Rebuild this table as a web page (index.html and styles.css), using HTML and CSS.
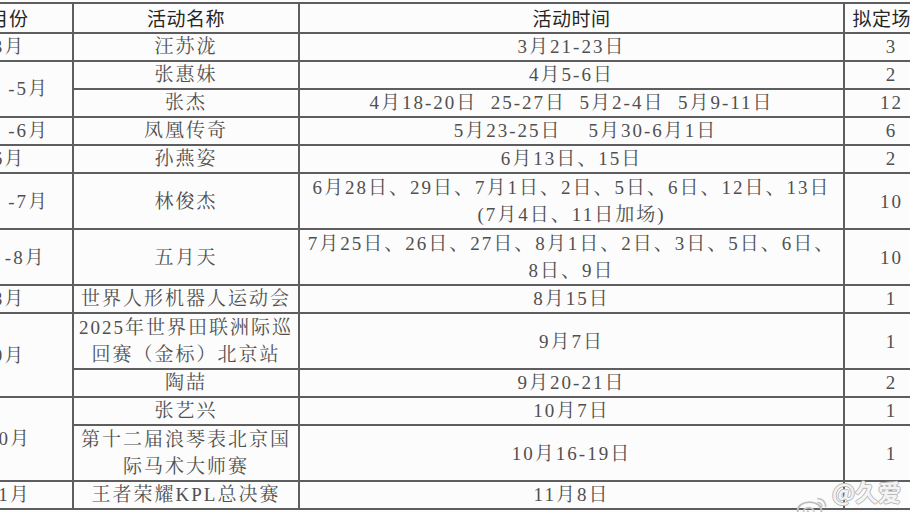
FILE: index.html
```html
<!DOCTYPE html>
<html lang="zh-CN">
<head>
<meta charset="utf-8">
<title>活动安排</title>
<link rel="stylesheet" href="styles.css">
</head>
<body>
<div class="page">
<table class="sched">
  <colgroup>
    <col class="c-month"><col class="c-name"><col class="c-time"><col class="c-count">
  </colgroup>
  <thead>
    <tr class="r1 head"><th>月份</th><th>活动名称</th><th>活动时间</th><th>拟定场次</th></tr>
  </thead>
  <tbody>
    <tr class="r1"><td>3月</td><td>汪苏泷</td><td>3月21-23日</td><td>3</td></tr>
    <tr class="r1"><td rowspan="2">4月 -5月</td><td>张惠妹</td><td>4月5-6日</td><td>2</td></tr>
    <tr class="r1"><td>张杰</td><td>4月18-20日&nbsp; 25-27日&nbsp; 5月2-4日&nbsp; 5月9-11日</td><td>12</td></tr>
    <tr class="r1"><td>5月 -6月</td><td>凤凰传奇</td><td class="shift">5月23-25日&nbsp;&nbsp;&nbsp; 5月30-6月1日</td><td>6</td></tr>
    <tr class="r1"><td>6月</td><td>孙燕姿</td><td>6月13日、15日</td><td>2</td></tr>
    <tr class="r2"><td>6月 -7月</td><td>林俊杰</td><td>6月28日、29日、7月1日、2日、5日、6日、12日、13日<br>(7月4日、11日加场)</td><td>10</td></tr>
    <tr class="r2"><td>7月-8月</td><td>五月天</td><td>7月25日、26日、27日、8月1日、2日、3日、5日、6日、<br>8日、9日</td><td>10</td></tr>
    <tr class="r1"><td>8月</td><td>世界人形机器人运动会</td><td>8月15日</td><td>1</td></tr>
    <tr class="r2"><td rowspan="2">9月</td><td>2025年世界田联洲际巡<br>回赛（金标）北京站</td><td>9月7日</td><td>1</td></tr>
    <tr class="r1"><td>陶喆</td><td>9月20-21日</td><td>2</td></tr>
    <tr class="r1"><td rowspan="2">10月</td><td>张艺兴</td><td>10月7日</td><td>1</td></tr>
    <tr class="r2"><td>第十二届浪琴表北京国<br>际马术大师赛</td><td>10月16-19日</td><td>1</td></tr>
    <tr class="r1"><td>11月</td><td>王者荣耀KPL总决赛</td><td>11月8日</td><td>1</td></tr>
  </tbody>
</table>
<div class="mark">
  <svg class="wb" width="40" height="30" viewBox="0 0 40 30">
    <ellipse cx="16" cy="18" rx="14" ry="10" fill="none" stroke="#bdbdbd" stroke-width="2.2"/>
    <ellipse cx="15" cy="19" rx="6" ry="4.5" fill="none" stroke="#c8c8c8" stroke-width="2"/>
    <circle cx="14" cy="19.5" r="1.6" fill="#c4c4c4"/>
    <path d="M26 4 A9 9 0 0 1 35 13" fill="none" stroke="#c4c4c4" stroke-width="2.2" stroke-linecap="round"/>
    <path d="M26 8.5 A4.5 4.5 0 0 1 30.5 13" fill="none" stroke="#c4c4c4" stroke-width="2" stroke-linecap="round"/>
  </svg>
  <span class="mark-text">@久爱吃</span>
</div>
</div>
</body>
</html>
```
FILE: styles.css
```css
html, body {
  margin: 0;
  padding: 0;
  background: #fcfcfc;
}
.page {
  position: relative;
  width: 910px;
  height: 512px;
  overflow: hidden;
}
.sched {
  border-collapse: collapse;
  table-layout: fixed;
  margin: 2px 0 0 -56px;
  width: 994px;
  font-family: "Liberation Serif", "Noto Serif CJK SC", "Noto Sans CJK SC", serif;
  font-size: 19px;
  color: #505050;
  letter-spacing: 2px;
}
.c-month { width: 128px; }
.c-name { width: 226px; }
.c-time { width: 545px; }
.c-count { width: 95px; }
.sched th, .sched td {
  border: 2px solid #5e5e5e;
  padding: 0;
  text-align: center;
  vertical-align: middle;
  line-height: 26px;
  white-space: nowrap;
}
.sched th {
  font-family: "Noto Sans CJK SC", sans-serif;
  font-weight: 400;
  color: #262626;
  font-size: 19px;
  letter-spacing: 0.5px;
}
.sched td.shift { padding-left: 28px; }
.r1.head th { height: 28px; }
.r1 td { height: 26px; }
.r2 td { height: 54px; line-height: 27px; }
.mark {
  position: absolute;
  left: 796px;
  top: 474px;
  display: flex;
  align-items: center;
  gap: 2px;
}
.mark-text {
  font-family: "Noto Sans CJK SC", sans-serif;
  font-size: 23px;
  font-weight: 700;
  color: #f4f4f4;
  letter-spacing: 0;
  text-shadow: 1px 0 0 #b8b8b8, -1px 0 0 #b8b8b8, 0 1px 0 #b8b8b8, 0 -1px 0 #b8b8b8;
}
```
